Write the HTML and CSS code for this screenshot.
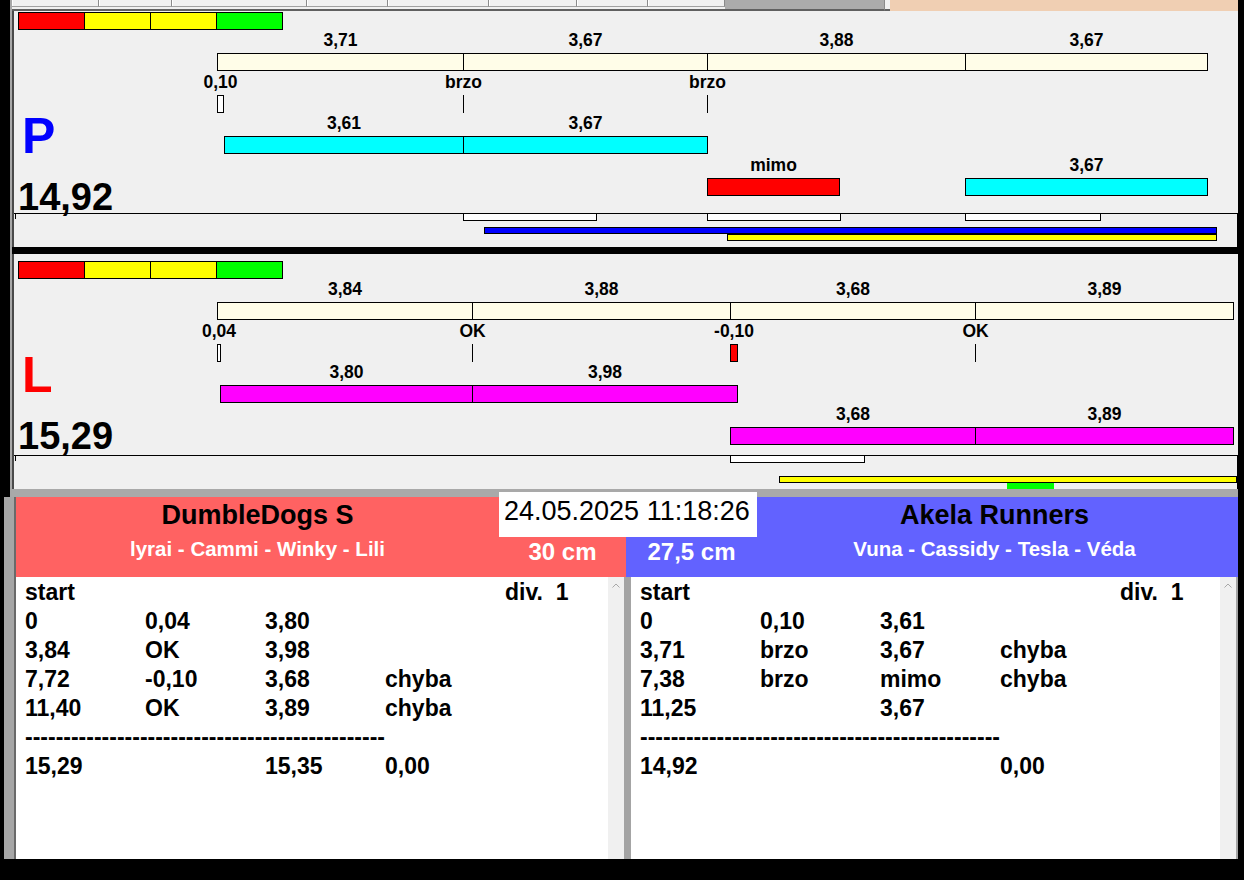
FILE: index.html
```html
<!DOCTYPE html>
<html>
<head>
<meta charset="utf-8">
<title>Agility timing</title>
<link rel="stylesheet" href="styles.css">
</head>
<body>
<div class="app">
  <div class="tabbar">
    <div class="tabs">
      <div class="tab t1"></div>
      <div class="tab t2"></div>
      <div class="tab t3"></div>
      <div class="tab t4"></div>
      <div class="tab t5"></div>
      <div class="tab t6"></div>
      <div class="tab t7"></div>
      <div class="tab t8"></div>
    </div>
    <div class="tab-cur"></div>
    <div class="tab-gap"></div>
    <div class="tab-fill"></div>
  </div>

  <div class="lanes">
    <section class="lane lane-p">
      <div class="rows rows-p">
        <div class="legend"><span class="lg c-red"></span><span class="lg c-yellow"></span><span class="lg c-yellow"></span><span class="lg c-green"></span></div>

        <div class="bar r1 cream" style="left:203px;width:247px"><span class="bar-lbl">3,71</span></div>
        <div class="bar r1 cream" style="left:449px;width:245px"><span class="bar-lbl">3,67</span></div>
        <div class="bar r1 cream" style="left:693px;width:259px"><span class="bar-lbl">3,88</span></div>
        <div class="bar r1 cream" style="left:951px;width:243px"><span class="bar-lbl">3,67</span></div>

        <div class="mark" style="left:203px;width:7px"><span class="mark-lbl">0,10</span><span class="tick tick-box"></span></div>
        <div class="mark" style="left:449px"><span class="mark-lbl">brzo</span><span class="tick tick-line"></span></div>
        <div class="mark" style="left:693px"><span class="mark-lbl">brzo</span><span class="tick tick-line"></span></div>

        <div class="bar r2 cyan" style="left:210px;width:240px"><span class="bar-lbl">3,61</span></div>
        <div class="bar r2 cyan" style="left:449px;width:245px"><span class="bar-lbl">3,67</span></div>

        <div class="bar r3 c-red" style="left:693px;width:133px"><span class="bar-lbl">mimo</span></div>
        <div class="bar r3 cyan" style="left:951px;width:243px"><span class="bar-lbl">3,67</span></div>
      </div>
      <div class="letter letter-p">P</div>
      <div class="trk">
        <span class="seg seg-w" style="left:449px;width:134px"></span>
        <span class="seg seg-w" style="left:693px;width:134px"></span>
        <span class="seg seg-w" style="left:951px;width:136px"></span>
        <span class="seg seg-b" style="left:470px;width:733px"></span>
        <span class="seg seg-y" style="left:713px;width:490px"></span>
      </div>
      <div class="score score-p">14,92</div>
    </section>

    <div class="lane-sep"></div>

    <section class="lane lane-l">
      <div class="rows">
        <div class="legend"><span class="lg c-red"></span><span class="lg c-yellow"></span><span class="lg c-yellow"></span><span class="lg c-green"></span></div>

        <div class="bar r1 cream" style="left:203px;width:256px"><span class="bar-lbl">3,84</span></div>
        <div class="bar r1 cream" style="left:458px;width:259px"><span class="bar-lbl">3,88</span></div>
        <div class="bar r1 cream" style="left:716px;width:246px"><span class="bar-lbl">3,68</span></div>
        <div class="bar r1 cream" style="left:961px;width:259px"><span class="bar-lbl">3,89</span></div>

        <div class="mark" style="left:203px;width:4px"><span class="mark-lbl">0,04</span><span class="tick tick-box"></span></div>
        <div class="mark" style="left:458px"><span class="mark-lbl">OK</span><span class="tick tick-line"></span></div>
        <div class="mark" style="left:716px;width:8px"><span class="mark-lbl">-0,10</span><span class="tick tick-red"></span></div>
        <div class="mark" style="left:961px"><span class="mark-lbl">OK</span><span class="tick tick-line"></span></div>

        <div class="bar r2 magenta" style="left:206px;width:253px"><span class="bar-lbl">3,80</span></div>
        <div class="bar r2 magenta" style="left:458px;width:266px"><span class="bar-lbl">3,98</span></div>

        <div class="bar r3 magenta" style="left:716px;width:246px"><span class="bar-lbl">3,68</span></div>
        <div class="bar r3 magenta" style="left:961px;width:259px"><span class="bar-lbl">3,89</span></div>
      </div>
      <div class="letter letter-l">L</div>
      <div class="trk">
        <span class="seg seg-w" style="left:716px;width:135px"></span>
        <span class="seg seg-y" style="left:765px;width:458px"></span>
        <span class="seg seg-g" style="left:993px;width:47px"></span>
      </div>
      <div class="score score-l">15,29</div>
    </section>

    <div class="strip"></div>
  </div>

  <div class="bottom">
    <div class="team team-l">
      <div class="head">
        <div class="names">
          <div class="tname">DumbleDogs S</div>
          <div class="dogs">lyrai - Cammi - Winky - Lili</div>
        </div>
        <div class="cm">30 cm</div>
      </div>
      <div class="body">
        <div class="sheet">
          <div class="grid">
            <span>start</span><span></span><span></span><span></span><span class="div">div.  1</span>
            <span>0</span><span>0,04</span><span>3,80</span><span></span><span></span>
            <span>3,84</span><span>OK</span><span>3,98</span><span></span><span></span>
            <span>7,72</span><span>-0,10</span><span>3,68</span><span>chyba</span><span></span>
            <span>11,40</span><span>OK</span><span>3,89</span><span>chyba</span><span></span>
            <span class="dash">-----------------------------------------------</span>
            <span>15,29</span><span></span><span>15,35</span><span>0,00</span><span></span>
          </div>
        </div>
        <div class="scroll"><svg class="chev" width="8" height="5" viewBox="0 0 8 5"><polyline points="0.5,4.5 4,1 7.5,4.5" fill="none" stroke="#a8a8a8" stroke-width="1"/></svg></div>
        <div class="gutter g-l"></div>
      </div>
    </div>

    <div class="team team-r">
      <div class="head">
        <div class="cm">27,5 cm</div>
        <div class="names">
          <div class="tname">Akela Runners</div>
          <div class="dogs">Vuna - Cassidy - Tesla - Véda</div>
        </div>
      </div>
      <div class="body">
        <div class="gutter g-r1"></div>
        <div class="sheet">
          <div class="grid">
            <span>start</span><span></span><span></span><span></span><span class="div">div.  1</span>
            <span>0</span><span>0,10</span><span>3,61</span><span></span><span></span>
            <span>3,71</span><span>brzo</span><span>3,67</span><span>chyba</span><span></span>
            <span>7,38</span><span>brzo</span><span>mimo</span><span>chyba</span><span></span>
            <span>11,25</span><span></span><span>3,67</span><span></span><span></span>
            <span class="dash">-----------------------------------------------</span>
            <span>14,92</span><span></span><span></span><span>0,00</span><span></span>
          </div>
        </div>
        <div class="scroll"><svg class="chev" width="8" height="5" viewBox="0 0 8 5"><polyline points="0.5,4.5 4,1 7.5,4.5" fill="none" stroke="#a8a8a8" stroke-width="1"/></svg></div>
        <div class="gutter g-r2"></div>
      </div>
    </div>
  </div>

  <div class="date">24.05.2025 11:18:26</div>
</div>
</body>
</html>
```

FILE: styles.css
```css
* { box-sizing: border-box; margin: 0; padding: 0; }
html, body { width: 1244px; height: 880px; overflow: hidden; background: #000; }
body { font-family: "Liberation Sans", Arial, sans-serif; color: #000; }

.app { position: relative; width: 1244px; height: 880px; background: #000; display: flex; flex-direction: column; }

/* tab strip */
.tabbar { display: flex; height: 11px; margin: 0 6px 0 10px; border-left: 2px solid #a8a8a8; }
.tabs { display: flex; align-items: flex-start; height: 11px; background: #f0f0f0; border-bottom: 2px solid #606060; }
.tab { height: 7px; background: #f0f0f0; border-right: 1px solid #8a8a8a; border-bottom: 1px solid #a0a0a0; box-shadow: inset 1px 0 0 #ffffff; }
.t1 { width: 87px; }
.t2 { width: 73px; }
.t3 { width: 135px; }
.t4 { width: 81px; }
.t5 { width: 101px; }
.t6 { width: 88px; }
.t7 { width: 71px; }
.t8 { width: 77px; }
.tab-cur { width: 159px; background: #ababab; border-bottom: 2px solid #606060; }
.tab-gap { width: 6px; background: #f0f0f0; border-left: 1px solid #8a8a8a; border-bottom: 2px solid #606060; }
.tab-fill { flex: 1; background: #f0cfb3; }

/* lanes */
.lanes { display: flex; flex-direction: column; margin: 0 6px 0 10px; border-left: 2px solid #a8a8a8; }
.lane { position: relative; overflow: hidden; background: #f0f0f0; border-left: 2px solid #4a4a4a; }
.lane-p { height: 236px; }
.lane-l { height: 235px; }
.lane-sep { height: 7px; background: #000; }
.strip { height: 8px; background: #a9a9a9; }

.rows { position: absolute; left: 0; right: 0; top: 0; height: 205px; }
.rows-p { top: -6px; }

.legend { position: absolute; left: 4px; top: 7px; display: flex; }
.lg { width: 67px; height: 18px; border: 1px solid #000; margin-left: -1px; }
.lg:first-child { margin-left: 0; }

.c-red { background: #ff0000; }
.c-yellow { background: #ffff00; }
.c-green { background: #00ff00; }
.cream { background: #fffde8; }
.cyan { background: #00ffff; }
.magenta { background: #ff00ff; }

.bar { position: absolute; height: 18px; border: 1px solid #000; }
.r1 { top: 48px; }
.r2 { top: 131px; }
.r3 { top: 173px; }
.bar-lbl { position: absolute; left: 0; right: 0; bottom: calc(100% + 5px); text-align: center; font-weight: bold; font-size: 17.5px; line-height: 18px; white-space: nowrap; }

.mark { position: absolute; top: 68px; width: 1px; height: 40px; }
.mark-lbl { position: absolute; left: 50%; top: 0; transform: translateX(-50%); font-weight: bold; font-size: 17.5px; line-height: 18px; white-space: nowrap; }
.tick { position: absolute; left: 0; right: 0; top: 22px; height: 18px; }
.tick-line { background: #000; }
.tick-box { border: 1px solid #000; background: #fff; }
.tick-red { border: 1px solid #000; background: #ff0000; }

.letter { position: absolute; left: 8px; font-weight: bold; font-size: 50px; line-height: 50px; }
.letter-p { top: 100px; color: #0000ff; }
.letter-l { top: 96px; color: #ff0000; }

.score { position: absolute; left: 4px; font-weight: bold; font-size: 38px; line-height: 38px; }
.score-p { top: 167px; }
.score-l { top: 163px; }

.trk { position: absolute; left: 0; right: 0; bottom: 0; height: 34px; border-top: 1px solid #000; border-right: 1px solid #000; }
.trk::before { content: ""; position: absolute; left: 1px; top: 0; width: 1px; height: 5px; background: #000; }
.seg { position: absolute; border: 1px solid #000; }
.seg-w { top: -1px; height: 8px; background: #fff; }
.seg-b { top: 13px; height: 7px; background: #0000ff; }
.seg-y { top: 20px; height: 7px; background: #ffff00; }
.seg-g { top: 27px; height: 6px; background: #00ff00; border: none; }

/* bottom */
.bottom { display: flex; height: 362px; margin: 0 6px 0 4px; border-left: 10px solid #a6a6a6; padding-left: 2px; background: #6a6a6a; }
.team { display: flex; flex-direction: column; }
.team-l { width: 610px; }
.team-r { flex: 1; }
.head { height: 80px; display: flex; }
.team-l .head { background: #ff6262; }
.team-r .head { background: #6262ff; }
.names { display: flex; flex-direction: column; align-items: center; padding-top: 2px; }
.team-l .names { width: 483px; }
.team-r .names { flex: 1; padding-right: 6px; }
.tname { font-weight: bold; font-size: 27px; line-height: 32px; white-space: nowrap; }
.dogs { margin-top: 5px; color: #fff; font-weight: bold; font-size: 20.5px; line-height: 26px; white-space: nowrap; }
.cm { width: 127px; padding-top: 41px; text-align: center; color: #fff; font-weight: bold; font-size: 24px; line-height: 28px; white-space: nowrap; }
.team-r .cm { width: 131px; }

.body { flex: 1; display: flex; }
.sheet { flex: 1; background: #fff; padding: 1px 0 0 9px; font-weight: bold; font-size: 23px; line-height: 29px; }
.grid { display: grid; grid-template-columns: 120px 120px 120px 120px auto; }
.grid span { white-space: nowrap; }
.grid .div { white-space: pre; }
.grid .dash { grid-column: 1 / -1; overflow: hidden; }
.scroll { position: relative; width: 16px; background: #f0f0f0; }
.chev { position: absolute; left: 4px; top: 6px; }
.gutter { background: #a4a4a4; }
.g-l { width: 2px; }
.g-r1 { width: 5px; }
.g-r2 { width: 2px; }

.date { position: absolute; left: 499px; top: 492px; width: 258px; height: 45px; background: #fff; padding: 6px 0 0 5px; font-size: 27px; line-height: 27px; white-space: nowrap; }
```
